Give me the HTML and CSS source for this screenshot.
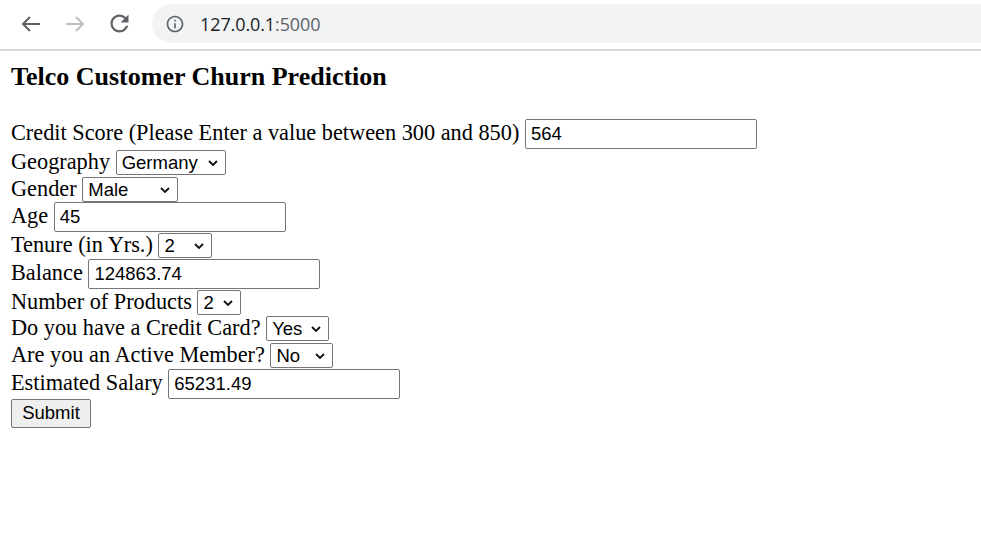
FILE: index.html
```html
<!DOCTYPE html>
<html lang="en">
<head>
<meta charset="utf-8">
<title>Telco Customer Churn Prediction</title>
<link rel="stylesheet" href="styles.css">
</head>
<body>
<header class="toolbar">
  <nav class="nav">
    <span class="nav-btn">
      <svg width="22" height="18" viewBox="0 0 22 18"><path d="M20 9H3M10 2L3 9l7 7" fill="none" stroke="#5f6368" stroke-width="2"/></svg>
    </span>
    <span class="nav-btn">
      <svg width="22" height="18" viewBox="0 0 22 18"><path d="M2 9h17M12 2l7 7-7 7" fill="none" stroke="#bdbdbd" stroke-width="2"/></svg>
    </span>
    <span class="nav-btn">
      <svg width="27" height="27" viewBox="0 0 24 24"><path fill="#5f6368" d="M17.65 6.35C16.2 4.9 14.21 4 12 4c-4.42 0-7.990 3.580-7.990 8s3.570 8 7.990 8c3.730 0 6.840-2.550 7.730-6h-2.080c-.820 2.330-3.040 4-5.650 4-3.310 0-6-2.690-6-6s2.690-6 6-6c1.660 0 3.140.690 4.220 1.780L13 11h7V4l-2.350 2.350z"/></svg>
    </span>
  </nav>
  <div class="omnibox">
    <svg class="info" width="20" height="20" viewBox="0 0 24 24"><path fill="#5f6368" d="M11 7h2v2h-2zm0 4h2v6h-2zm1-9C6.48 2 2 6.48 2 12s4.48 10 10 10 10-4.48 10-10S17.52 2 12 2zm0 18c-4.41 0-8-3.59-8-8s3.59-8 8-8 8 3.59 8 8-3.59 8-8 8z"/></svg>
    <span class="url"><span class="host">127.0.0.1</span><span class="port">:5000</span></span>
  </div>
</header>

<main class="page">
  <h3 class="title">Telco Customer Churn Prediction</h3>
  <form class="form">
    <div class="row">
      <label class="label" for="credit">Credit Score (Please Enter a value between 300 and 850)</label>
      <input class="field" id="credit" type="text" value="564">
    </div>
    <div class="row">
      <label class="label" for="geo">Geography</label>
      <span class="select-wrap">
        <select class="select w-geo" id="geo"><option>France</option><option selected>Germany</option><option>Spain</option></select>
        <svg class="chev" width="10" height="6" viewBox="0 0 10 6"><path d="M1 1l4 4 4-4" fill="none" stroke="#111" stroke-width="1.8"/></svg>
      </span>
    </div>
    <div class="row">
      <label class="label" for="gender">Gender</label>
      <span class="select-wrap">
        <select class="select w-gender" id="gender"><option selected>Male</option><option>Female</option></select>
        <svg class="chev" width="10" height="6" viewBox="0 0 10 6"><path d="M1 1l4 4 4-4" fill="none" stroke="#111" stroke-width="1.8"/></svg>
      </span>
    </div>
    <div class="row">
      <label class="label" for="age">Age</label>
      <input class="field" id="age" type="text" value="45">
    </div>
    <div class="row">
      <label class="label" for="tenure">Tenure (in Yrs.)</label>
      <span class="select-wrap">
        <select class="select w-tenure" id="tenure"><option>0</option><option>1</option><option selected>2</option><option>3</option><option>4</option><option>5</option><option>6</option><option>7</option><option>8</option><option>9</option><option>10</option></select>
        <svg class="chev" width="10" height="6" viewBox="0 0 10 6"><path d="M1 1l4 4 4-4" fill="none" stroke="#111" stroke-width="1.8"/></svg>
      </span>
    </div>
    <div class="row">
      <label class="label" for="balance">Balance</label>
      <input class="field" id="balance" type="text" value="124863.74">
    </div>
    <div class="row">
      <label class="label" for="products">Number of Products</label>
      <span class="select-wrap">
        <select class="select w-products" id="products"><option>1</option><option selected>2</option><option>3</option><option>4</option></select>
        <svg class="chev" width="10" height="6" viewBox="0 0 10 6"><path d="M1 1l4 4 4-4" fill="none" stroke="#111" stroke-width="1.8"/></svg>
      </span>
    </div>
    <div class="row">
      <label class="label" for="card">Do you have a Credit Card?</label>
      <span class="select-wrap">
        <select class="select w-yesno" id="card"><option selected>Yes</option><option>No</option></select>
        <svg class="chev" width="10" height="6" viewBox="0 0 10 6"><path d="M1 1l4 4 4-4" fill="none" stroke="#111" stroke-width="1.8"/></svg>
      </span>
    </div>
    <div class="row">
      <label class="label" for="active">Are you an Active Member?</label>
      <span class="select-wrap">
        <select class="select w-yesno" id="active"><option>Yes</option><option selected>No</option></select>
        <svg class="chev" width="10" height="6" viewBox="0 0 10 6"><path d="M1 1l4 4 4-4" fill="none" stroke="#111" stroke-width="1.8"/></svg>
      </span>
    </div>
    <div class="row">
      <label class="label" for="salary">Estimated Salary</label>
      <input class="field" id="salary" type="text" value="65231.49">
    </div>
    <div class="row">
      <button class="submit" type="button">Submit</button>
    </div>
  </form>
</main>
</body>
</html>
```

FILE: styles.css
```css
* { box-sizing: border-box; }

html, body {
  margin: 0;
  padding: 0;
  background: #ffffff;
}

body {
  width: 981px;
  height: 554px;
  overflow: hidden;
  font-family: "Liberation Serif", "Times New Roman", serif;
  color: #000;
}

/* Browser toolbar */
.toolbar {
  display: flex;
  align-items: center;
  height: 51px;
  padding: 0 0 2px 9px;
  border-bottom: 2px solid #dadada;
  background: #fff;
}

.nav {
  display: flex;
  align-items: center;
}

.nav-btn {
  display: flex;
  align-items: center;
  justify-content: center;
  width: 44px;
  height: 44px;
}

.omnibox {
  display: flex;
  align-items: center;
  flex: 1;
  height: 39px;
  margin-left: 11px;
  padding-left: 12.5px;
  border-radius: 20px 0 0 20px;
  background: #f1f3f4;
}

.info {
  flex: none;
}

.url {
  margin-left: 15.5px;
  font-family: "Open Sans", "Noto Sans", sans-serif;
  font-size: 18px;
  letter-spacing: -0.1px;
}

.host { color: #202124; }
.port { color: #5f6368; }

/* Page */
.page {
  padding: 11px 11px 0 11px;
}

.title {
  margin: 0 0 27px 0;
  font-size: 26px;
  font-weight: bold;
  line-height: 30px;
}

.form {
  display: flex;
  flex-direction: column;
  font-size: 22.3px;
}

.row {
  display: flex;
  align-items: baseline;
  gap: 5.6px;
}

.label {
  line-height: 26.6px;
}

.field {
  width: 232px;
  height: 30px;
  margin: 0;
  padding: 1px 5px;
  border: 1px solid #767676;
  border-radius: 2px;
  font-family: "Liberation Sans", Arial, sans-serif;
  font-size: 18.5px;
  color: #000;
  background: #fff;
}

.select-wrap {
  position: relative;
  display: inline-flex;
}

.select {
  -webkit-appearance: none;
  appearance: none;
  height: 25px;
  margin: 0;
  padding: 0 0 0 5px;
  border: 1px solid #767676;
  border-radius: 2px;
  font-family: "Liberation Sans", Arial, sans-serif;
  font-size: 18.5px;
  color: #000;
  background: #fff;
}

.chev {
  position: absolute;
  right: 8px;
  top: 10px;
  pointer-events: none;
}

.w-geo { width: 110px; }
.w-gender { width: 96px; }
.w-tenure { width: 54px; }
.w-products { width: 44px; }
.w-yesno { width: 63px; }

.submit {
  width: 80px;
  height: 29px;
  margin: 0;
  padding: 0;
  border: 1px solid #767676;
  border-radius: 2px;
  background: #efefef;
  font-family: "Liberation Sans", Arial, sans-serif;
  font-size: 18.5px;
  color: #000;
}
```
